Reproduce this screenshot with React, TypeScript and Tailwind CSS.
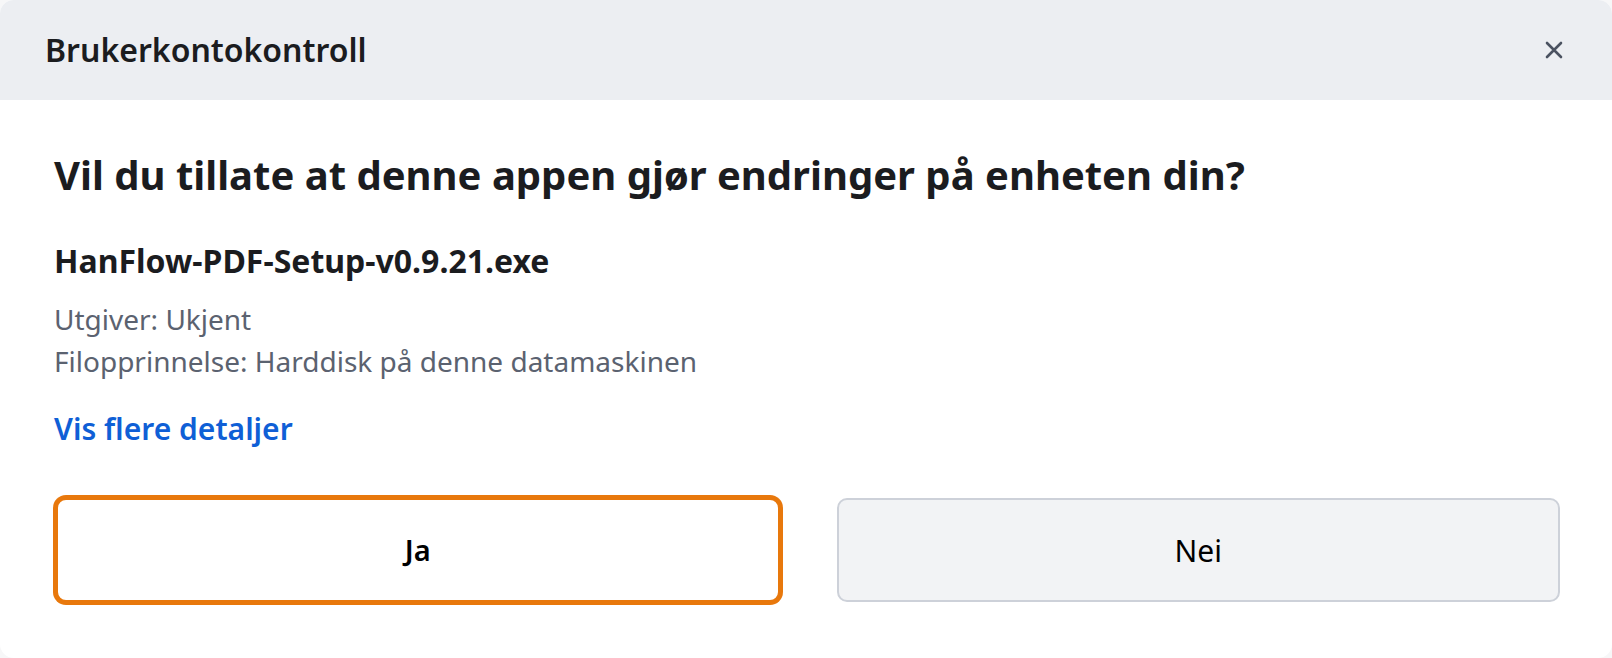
import * as React from "react"

export default function App() {
  return (
    <div
      className="w-[1612px] h-[658px] bg-[#f7f7f8]"
      style={{ fontFamily: '"Noto Sans", "Open Sans", sans-serif' }}
    >
      <div className="flex h-full flex-col overflow-hidden rounded-[14px] bg-white">
        <div className="flex h-[100px] shrink-0 items-center justify-between bg-[#eceef2] pl-[45px] pr-[46px]">
          <h1 className="text-[32px] font-semibold text-[#1b1c1f]">Brukerkontokontroll</h1>
          <button className="flex h-[24px] w-[24px] items-center justify-center text-[#4b5261]">
            <svg width="18" height="18" viewBox="0 0 18 18" fill="none" stroke="currentColor" strokeWidth="2.6" strokeLinecap="round">
              <path d="M2 2 L16 16 M16 2 L2 16" />
            </svg>
          </button>
        </div>

        <div className="flex flex-1 flex-col pt-[51px]">
          <div className="px-[54px]">
            <h2 className="text-[40px] leading-[48px] font-bold text-[#1b1c1f]">
              Vil du tillate at denne appen gjør endringer på enheten din?
            </h2>
            <div className="mt-[42px] text-[32px] leading-[40px] font-bold text-[#1b1c1f]">
              HanFlow-PDF-Setup-v0.9.21.exe
            </div>
            <div className="mt-[17px] text-[28px] leading-[42px] text-[#5b6270]">
              <div>Utgiver: Ukjent</div>
              <div>Filopprinnelse: Harddisk på denne datamaskinen</div>
            </div>
            <a className="mt-[29px] block w-fit text-[30px] leading-[36px] font-semibold text-[#0f5fd6]" href="#">
              Vis flere detaljer
            </a>
          </div>

          <div className="mt-[51px] grid grid-cols-2 gap-[57px] pl-[56px] pr-[52px]">
            <button className="h-[104px] rounded-[10px] border-2 border-[#e8780c] bg-white text-[29px] font-semibold text-black ring-[3px] ring-[#e8780c]">
              Ja
            </button>
            <button className="h-[104px] rounded-[10px] border-2 border-[#cdd1d9] bg-[#f2f3f5] text-[30px] text-black">
              Nei
            </button>
          </div>
        </div>
      </div>
    </div>
  )
}
